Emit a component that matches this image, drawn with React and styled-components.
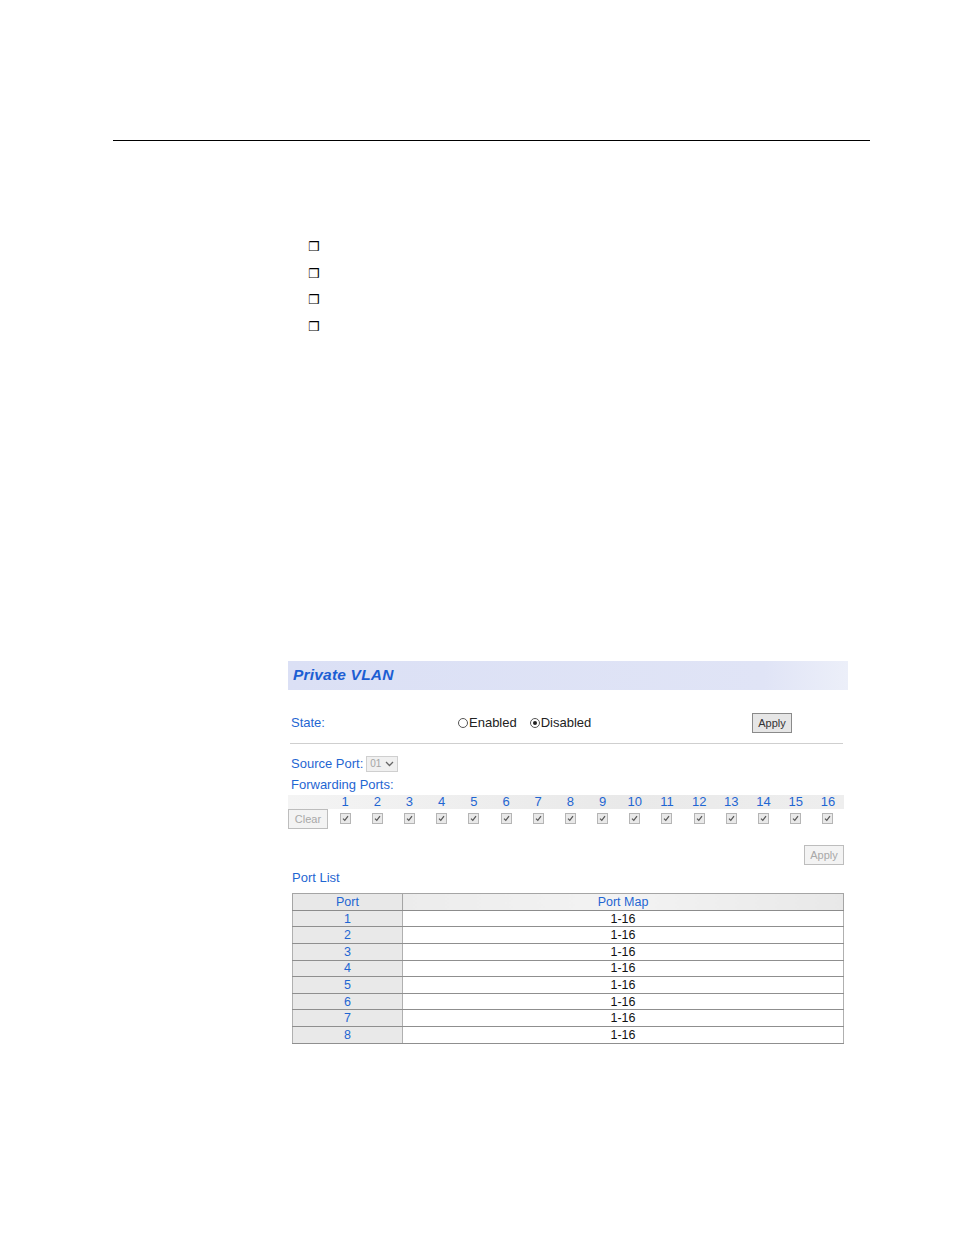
import React from 'react'
import styled, { createGlobalStyle } from 'styled-components'

const GlobalStyle = createGlobalStyle`
  html, body {
    margin: 0;
    padding: 0;
    background: #fff;
  }
  body {
    font-family: "Liberation Sans", Arial, sans-serif;
  }
`

const Page = styled.div`
  width: 954px;
  height: 1235px;
  overflow: hidden;
  padding-top: 140px;
  box-sizing: border-box;
`

const Rule = styled.div`
  margin-left: 113px;
  width: 757px;
  height: 1px;
  background: #000;
`

const Bullets = styled.ul`
  list-style: none;
  margin: 98px 0 0 308px;
  padding: 0;
`

const Bullet = styled.li`
  height: 26.7px;
  line-height: 16px;
  font-family: "DejaVu Sans", sans-serif;
  font-size: 12.5px;
  font-weight: bold;
  color: #000;
`

const Panel = styled.div`
  margin: 315px 0 0 288px;
  width: 560px;
  font-size: 13px;
  color: #1f66d2;
`

const Header = styled.div`
  height: 29px;
  display: flex;
  align-items: center;
  padding-left: 5px;
  background: linear-gradient(to right, #dbe0f5 0%, #e0e4f6 85%, #eceff9 100%);
`

const Title = styled.span`
  font-size: 15.5px;
  font-weight: bold;
  font-style: italic;
  color: #1c5ed3;
  letter-spacing: 0.2px;
`

const StateRow = styled.div`
  margin-top: 23px;
  height: 20px;
  display: flex;
  align-items: center;
  padding-left: 3px;
`

const Label = styled.span`
  width: ${p => p.w || 'auto'};
  flex: none;
`

const RadioGroup = styled.div`
  display: flex;
  align-items: center;
  gap: 13px;
  width: 294px;
  color: #222;
`

const RadioLabel = styled.label`
  display: flex;
  align-items: center;
`

const RadioDot = styled.span`
  width: 8px;
  height: 8px;
  border: 1px solid #555;
  border-radius: 50%;
  margin-right: 1px;
  display: flex;
  align-items: center;
  justify-content: center;
  &::after {
    content: '';
    width: 4px;
    height: 4px;
    border-radius: 50%;
    background: ${p => (p.on ? '#222' : 'transparent')};
  }
`

const Button = styled.button`
  font-family: "Liberation Sans", Arial, sans-serif;
  font-size: 11px;
  height: 20px;
  width: ${p => p.w || '40px'};
  padding: 0;
  background: ${p => (p.off ? '#f3f3f3' : '#e6e6e6')};
  border: 1px solid ${p => (p.off ? '#bdbdbd' : '#8a8a8a')};
  color: ${p => (p.off ? '#a8a8a8' : '#333')};
  border-radius: 0;
`

const Divider = styled.div`
  margin: 10px 0 0 2px;
  width: 553px;
  height: 1px;
  background: #cfcfcf;
`

const SourceRow = styled.div`
  margin-top: 12px;
  height: 16px;
  display: flex;
  align-items: center;
  padding-left: 3px;
`

const Select = styled.div`
  margin-left: 3px;
  width: 32px;
  height: 16px;
  border: 1px solid #cfcfcf;
  background: #f0f0f0;
  display: flex;
  align-items: center;
  justify-content: space-between;
  padding: 0 3px;
  box-sizing: border-box;
  font-size: 10px;
  color: #a5a5a5;
`

const FwdLabel = styled.div`
  margin-top: 5px;
  padding-left: 3px;
  height: 15px;
  line-height: 15px;
`

const PortGrid = styled.div`
  display: grid;
  grid-template-columns: 41px repeat(16, 32.2px);
  width: 556px;
`

const NumRow = styled(PortGrid)`
  margin-top: 3px;
  height: 14px;
  align-items: center;
  background: linear-gradient(to right, #f4f4f4, #e9e9e9 60%, #eeeeee);
`

const Num = styled.span`
  text-align: center;
  line-height: 14px;
`

const CheckRow = styled(PortGrid)`
  height: 20px;
  align-items: center;
`

const BoxCell = styled.span`
  display: flex;
  justify-content: center;
`

const Box = styled.span`
  width: 9px;
  height: 9px;
  border: 1px solid #b5b5b5;
  background: #e9e9e9;
  display: flex;
  align-items: center;
  justify-content: center;
`

const ApplyRow = styled.div`
  margin-top: 16px;
  width: 556px;
  display: flex;
  justify-content: flex-end;
`

const ListTitle = styled.div`
  margin-top: 4px;
  padding-left: 4px;
  height: 18px;
  line-height: 18px;
  font-size: 13px;
`

const Table = styled.table`
  margin: 6px 0 0 4px;
  width: 552px;
  border-collapse: collapse;
  font-size: 12.5px;
  border: 1px solid #9a9a9a;
`

const Th = styled.th`
  font-weight: normal;
  height: 16px;
  padding: 0;
  line-height: 14px;
  background: ${p => (p.narrow ? '#e8e8e8' : 'linear-gradient(to right, #ececec, #f3f3f3 50%, #e8e8e8)')};
  border: 1px solid #a5a5a5;
  border-bottom-color: #8c8c8c;
  width: ${p => (p.narrow ? '109px' : 'auto')};
  color: #1f66d2;
`

const Td = styled.td`
  height: 15.6px;
  padding: 0;
  line-height: 14px;
  text-align: center;
  border: 1px solid #b0b0b0;
  border-bottom-color: #8f8f8f;
  background: ${p => (p.port ? '#e9e9e9' : '#fff')};
  color: ${p => (p.port ? '#1f66d2' : '#111')};
`

const Check = () => (
  <svg width="7" height="7" viewBox="0 0 7 7">
    <path d="M1 3.6 L2.8 5.4 L6 1.2" fill="none" stroke="#555" strokeWidth="1.2" />
  </svg>
)

const Chevron = () => (
  <svg width="9" height="6" viewBox="0 0 9 6">
    <path d="M1 1 L4.5 4.5 L8 1" fill="none" stroke="#666" strokeWidth="1.3" />
  </svg>
)

const ports = Array.from({ length: 16 }, (_, i) => i + 1)
const rows = [1, 2, 3, 4, 5, 6, 7, 8]

export default function App() {
  return (
    <Page>
      <GlobalStyle />
      <Rule />
      <Bullets>
        {[0, 1, 2, 3].map(i => (
          <Bullet key={i}>❒</Bullet>
        ))}
      </Bullets>
      <Panel>
        <Header>
          <Title>Private VLAN</Title>
        </Header>
        <StateRow>
          <Label w="167px">State:</Label>
          <RadioGroup>
            <RadioLabel>
              <RadioDot />
              Enabled
            </RadioLabel>
            <RadioLabel>
              <RadioDot on />
              Disabled
            </RadioLabel>
          </RadioGroup>
          <Button w="40px">Apply</Button>
        </StateRow>
        <Divider />
        <SourceRow>
          <Label>Source Port:</Label>
          <Select>
            01
            <Chevron />
          </Select>
        </SourceRow>
        <FwdLabel>Forwarding Ports:</FwdLabel>
        <NumRow>
          <span />
          {ports.map(p => (
            <Num key={p}>{p}</Num>
          ))}
        </NumRow>
        <CheckRow>
          <Button off w="40px">Clear</Button>
          {ports.map(p => (
            <BoxCell key={p}>
              <Box>
                <Check />
              </Box>
            </BoxCell>
          ))}
        </CheckRow>
        <ApplyRow>
          <Button off w="40px">Apply</Button>
        </ApplyRow>
        <ListTitle>Port List</ListTitle>
        <Table>
          <thead>
            <tr>
              <Th narrow>Port</Th>
              <Th>Port Map</Th>
            </tr>
          </thead>
          <tbody>
            {rows.map(r => (
              <tr key={r}>
                <Td port>{r}</Td>
                <Td>1-16</Td>
              </tr>
            ))}
          </tbody>
        </Table>
      </Panel>
    </Page>
  )
}
